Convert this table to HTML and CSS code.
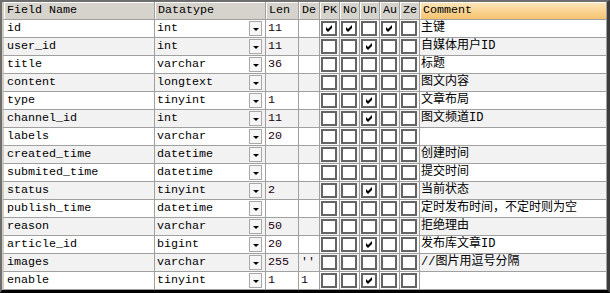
FILE: index.html
```html
<!DOCTYPE html>
<html>
<head>
<meta charset="utf-8">
<link rel="stylesheet" href="styles.css">
</head>
<body>
<div class="frame">
  <div class="grid">
    <div class="hd first">Field Name</div>
    <div class="hd">Datatype</div>
    <div class="hd">Len</div>
    <div class="hd">De</div>
    <div class="hd">PK</div>
    <div class="hd">No</div>
    <div class="hd">Un</div>
    <div class="hd">Au</div>
    <div class="hd">Ze</div>
    <div class="hd sel">Comment</div>
  </div>
  <div id="rows"></div>
</div>
<script src="app.js"></script>
</body>
</html>
```
FILE: app.js
```js
const data = [
  ["id","int","11","",[1,1,0,1,0],"主键"],
  ["user_id","int","11","",[0,0,1,0,0],"自媒体用户ID"],
  ["title","varchar","36","",[0,0,0,0,0],"标题"],
  ["content","longtext","","",[0,0,0,0,0],"图文内容"],
  ["type","tinyint","1","",[0,0,1,0,0],"文章布局"],
  ["channel_id","int","11","",[0,0,1,0,0],"图文频道ID"],
  ["labels","varchar","20","",[0,0,0,0,0],""],
  ["created_time","datetime","","",[0,0,0,0,0],"创建时间"],
  ["submited_time","datetime","","",[0,0,0,0,0],"提交时间"],
  ["status","tinyint","2","",[0,0,1,0,0],"当前状态"],
  ["publish_time","datetime","","",[0,0,0,0,0],"定时发布时间，不定时则为空"],
  ["reason","varchar","50","",[0,0,0,0,0],"拒绝理由"],
  ["article_id","bigint","20","",[0,0,1,0,0],"发布库文章ID"],
  ["images","varchar","255","''",[0,0,0,0,0],"//图片用逗号分隔"],
  ["enable","tinyint","1","1",[0,0,1,0,0],""]
];
const check = '<svg width="7" height="7" viewBox="0 0 7 7"><polygon points="0,2 2,4 6,0 6,3 2,7 0,5" fill="#000"/></svg>';
const rows = document.getElementById('rows');
data.forEach((r, i) => {
  const row = document.createElement('div');
  row.className = 'grid row' + (i % 2 ? ' alt' : '');
  let html = '<div class="c first">' + r[0] + '</div>';
  html += '<div class="c dt"><span class="dtv">' + r[1] + '</span><span class="dd"><i></i></span></div>';
  html += '<div class="c num">' + r[2] + '</div>';
  html += '<div class="c num">' + r[3] + '</div>';
  r[4].forEach(v => {
    html += '<div class="c cb"><span class="box">' + (v ? check : '') + '</span></div>';
  });
  html += '<div class="c cm">' + r[5] + '</div>';
  row.innerHTML = html;
  rows.appendChild(row);
});
```
FILE: styles.css
```css
html, body {
  margin: 0;
  padding: 0;
  background: #ffffff;
}
.frame {
  box-sizing: border-box;
  width: 610px;
  height: 293px;
  border-top: 2px solid #6e6e6e;
  border-left: 2px solid #6e6e6e;
  border-right: 3px solid #3c3c3c;
  border-bottom: 3px solid #000000;
  overflow: hidden;
  font-family: "Liberation Mono", "Noto Sans CJK SC", monospace;
  font-size: 11.7px;
  color: #000;
}
.grid {
  display: grid;
  grid-template-columns: 153px 111px 33px 21px 20px 20px 20px 20px 20px 187px;
  height: 18px;
}
.hd, .c {
  box-sizing: border-box;
  border-right: 1px solid #a0a0a0;
  border-bottom: 1px solid #a0a0a0;
  height: 18px;
  line-height: 17px;
  padding-left: 2px;
  white-space: nowrap;
  overflow: hidden;
}
.hd {
  background: #d6d3cc;
  box-shadow: inset 1px 1px 0 #ffffff;
  padding-left: 3px;
}
.hd.sel {
  background: linear-gradient(#fde6bb, #f6c46f);
}
.first {
  border-left: 2px solid #d0ccc4;
  padding-left: 3px;
}
.row.alt .c {
  background: #f2f2f2;
}
.row .c {
  background: #ffffff;
}
.dt {
  display: flex;
  align-items: center;
}
.dtv {
  flex: 1;
}
.dd {
  box-sizing: border-box;
  width: 13px;
  height: 15px;
  margin-right: 3px;
  border: 1px solid #a8a8a8;
  background: #f6f6f6;
  display: flex;
  align-items: center;
  justify-content: center;
}
.dd i {
  width: 0;
  height: 0;
  border-left: 3px solid transparent;
  border-right: 3px solid transparent;
  border-top: 3px solid #000;
  margin-top: 1px;
}
.num {
  color: #1a0010;
}
.cb {
  display: flex;
  align-items: center;
  padding-left: 1px;
}
.box {
  box-sizing: border-box;
  width: 16px;
  height: 15px;
  border: 2px solid #646464;
  background: #ffffff;
  display: flex;
  align-items: center;
  justify-content: center;
}
.box svg {
  display: block;
}
.cm {
  font-size: 12px;
  padding-left: 1px;
}
```
